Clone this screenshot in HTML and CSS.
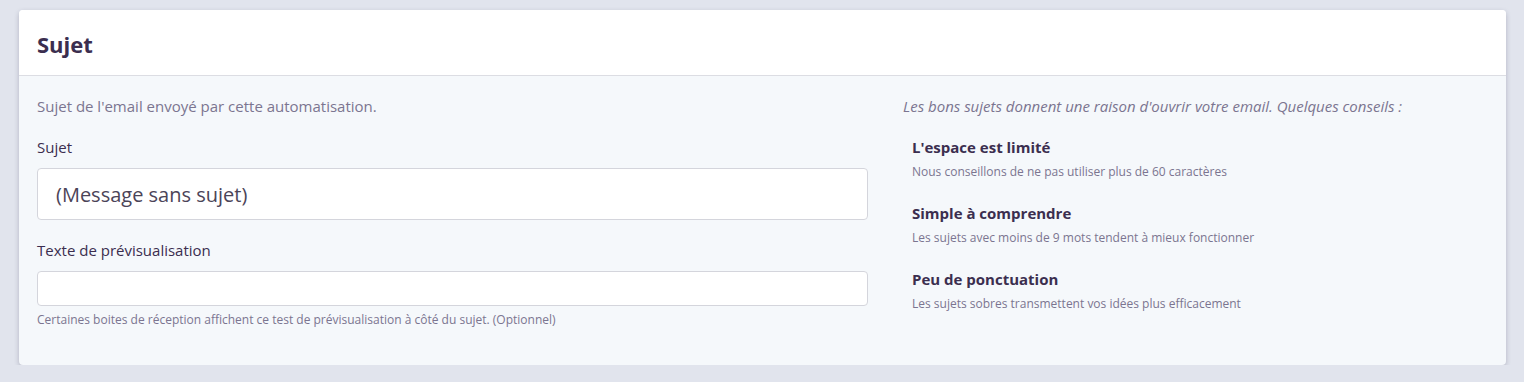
FILE: index.html
```html
<!DOCTYPE html>
<html>
<head>
    <title>Sujet</title>
    <meta charset="utf-8">
    <link rel="stylesheet" href="styles.css">
</head>
<body>
    <div class="card">
        <div class="card-header">
            <h2>Sujet</h2>
        </div>
        <div class="card-body">
            <div class="col-form">
                <p class="intro">Sujet de l'email envoyé par cette automatisation.</p>
                <label for="subject">Sujet</label>
                <input type="text" id="subject" class="input-lg" value="(Message sans sujet)">
                <label for="preview">Texte de prévisualisation</label>
                <input type="text" id="preview" class="input-sm">
                <span class="help">Certaines boites de réception affichent ce test de prévisualisation à côté du sujet. (Optionnel)</span>
            </div>
            <div class="col-tips">
                <p class="tips-intro">Les bons sujets donnent une raison d'ouvrir votre email. Quelques conseils :</p>
                <div class="tip">
                    <h4>L'espace est limité</h4>
                    <span>Nous conseillons de ne pas utiliser plus de 60 caractères</span>
                </div>
                <div class="tip">
                    <h4>Simple à comprendre</h4>
                    <span>Les sujets avec moins de 9 mots tendent à mieux fonctionner</span>
                </div>
                <div class="tip">
                    <h4>Peu de ponctuation</h4>
                    <span>Les sujets sobres transmettent vos idées plus efficacement</span>
                </div>
            </div>
        </div>
    </div>
</body>
</html>
```

FILE: styles.css
```css
*{
    box-sizing: border-box;
}

body{
    margin: 0;
    padding: 10px 18px 0 19px;
    background: #e1e4ed;
    font-family: 'Open Sans', 'Noto Sans', sans-serif;
    color: #3b2e4f;
}

.card{
    background: #f5f8fb;
    border-radius: 4px;
    box-shadow: 0 2px 5px rgba(40, 40, 70, 0.25);
    overflow: hidden;
}

.card-header{
    background: #ffffff;
    height: 66px;
    padding: 0 18px;
    display: flex;
    align-items: center;
    border-bottom: 1px solid #dcdde3;
}

.card-header h2{
    margin: 2px 0 0;
    font-size: 22px;
    font-weight: 700;
    color: #3b2e4f;
}

.card-body{
    display: grid;
    grid-template-columns: 831px 1fr;
    gap: 35px;
    padding: 20px 18px 37px;
}

.col-form{
    display: flex;
    flex-direction: column;
}

.intro{
    margin: 0 0 21px;
    font-size: 15px;
    line-height: 20px;
    color: #7b7590;
}

label{
    font-size: 15px;
    line-height: 20px;
    margin-bottom: 11px;
    color: #3b2e4f;
}

input{
    font-family: inherit;
    background: #ffffff;
    border: 1px solid #d4d5dc;
    border-radius: 4px;
    color: #4b4458;
}

.input-lg{
    height: 52px;
    padding: 0 18px;
    font-size: 20px;
    margin-bottom: 20px;
}

.input-sm{
    height: 35px;
    padding: 0 10px;
    font-size: 14px;
    margin-bottom: 6px;
}

.help{
    font-size: 12px;
    line-height: 16px;
    color: #7b7590;
}

.tips-intro{
    margin: 0 0 21px;
    font-size: 15px;
    line-height: 20px;
    font-style: italic;
    color: #7b7590;
}

.tip{
    margin: 0 0 23px 9px;
}

.tip:last-child{
    margin-bottom: 0;
}

.tip h4{
    margin: 0 0 7px;
    font-size: 15px;
    line-height: 20px;
    font-weight: 700;
}

.tip span{
    display: block;
    font-size: 12px;
    line-height: 16px;
    color: #7b7590;
}
```
